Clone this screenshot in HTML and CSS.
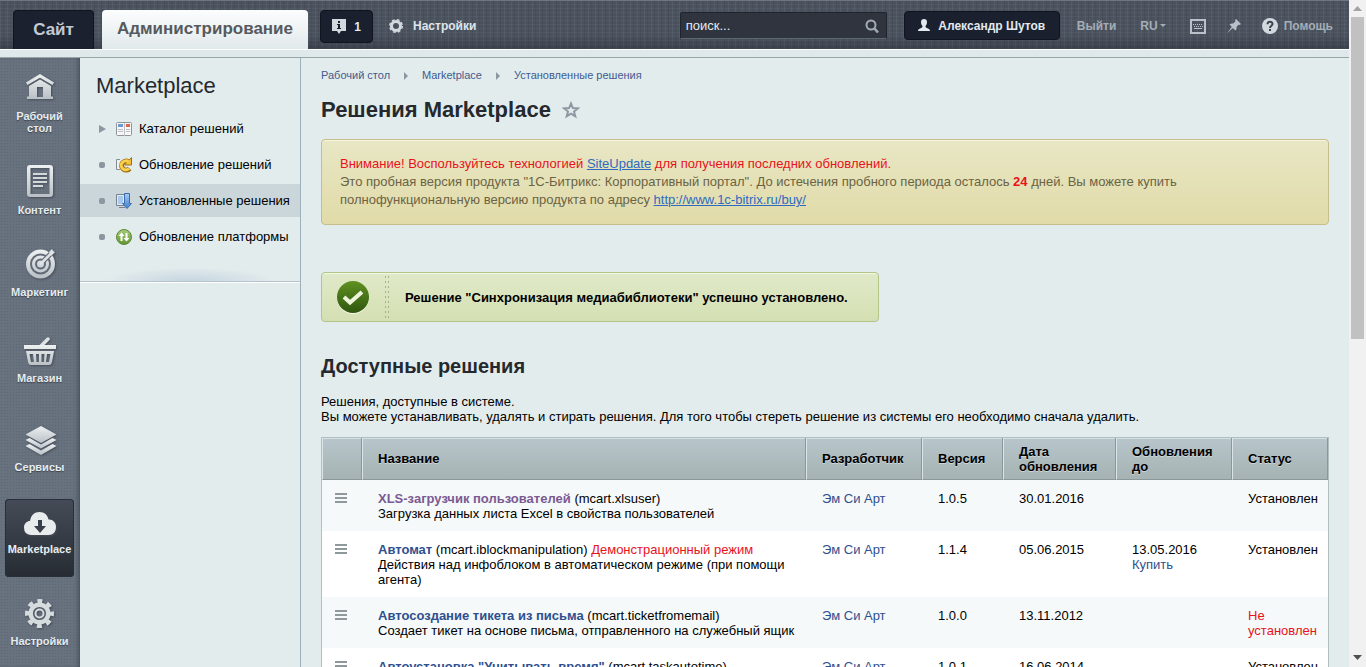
FILE: index.html
```
<!DOCTYPE html>
<html lang="ru">
<head>
    <meta charset="UTF-8">
    <meta name="viewport" content="width=device-width, initial-scale=1.0">
    <title>Решения Marketplace</title>
    <link rel="stylesheet" href="styles.css">
</head>
<body>
    <!-- Общие градиенты для иконок -->
    <svg class="defs" width="0" height="0" aria-hidden="true">
        <defs>
            <linearGradient id="silver" x1="0" y1="0" x2="0" y2="1">
                <stop offset="0" stop-color="#eef1f2"/>
                <stop offset="1" stop-color="#b9c0c5"/>
            </linearGradient>
            <linearGradient id="greenDark" x1="0" y1="0" x2="0" y2="1">
                <stop offset="0" stop-color="#5f9120"/>
                <stop offset="1" stop-color="#2f5610"/>
            </linearGradient>
            <linearGradient id="greenLight" x1="0" y1="0" x2="0" y2="1">
                <stop offset="0" stop-color="#a9cc7c"/>
                <stop offset="1" stop-color="#5f9431"/>
            </linearGradient>
            <linearGradient id="gold" x1="0" y1="0" x2="0" y2="1">
                <stop offset="0" stop-color="#ffe27a"/>
                <stop offset="1" stop-color="#e8a51b"/>
            </linearGradient>
            <linearGradient id="blue" x1="0" y1="0" x2="0" y2="1">
                <stop offset="0" stop-color="#a9cbf2"/>
                <stop offset="1" stop-color="#3f7fd0"/>
            </linearGradient>
        </defs>
    </svg>

    <div class="page">
        <!-- Верхняя панель -->
        <header class="header">
            <a href="#" class="tab tab-site">Сайт</a>
            <a href="#" class="tab tab-admin">Администрирование</a>
            <button type="button" class="notify">
                <svg width="14" height="15" viewBox="0 0 14 15"><path fill="#d3d9df" d="M0 0h14v12H9l-2 3-2-3H0z"/><path fill="#1b202e" d="M6 2h2v2H6zM5 5h3v4h1v1H5V9h1V6H5z"/></svg>
                <span>1</span>
            </button>
            <a href="#" class="settings">
                <svg width="14" height="14" viewBox="0 0 14 14"><circle cx="7" cy="7" r="4.500" fill="none" stroke="#d3d9df" stroke-width="3"/><circle cx="7" cy="7" r="6.300" fill="none" stroke="#d3d9df" stroke-width="1.400" stroke-dasharray="2.800 2.150"/></svg>
                <span>Настройки</span>
            </a>

            <form class="search">
                <input type="text" value="поиск..." aria-label="Поиск">
                <button type="button" aria-label="Найти">
                    <svg width="14" height="14" viewBox="0 0 14 14" fill="none" stroke="#a3abb4"><circle cx="6" cy="6" r="4.500" stroke-width="2"/><path stroke-width="2.500" d="M9 9l4 4.500"/></svg>
                </button>
            </form>
            <button type="button" class="user">
                <svg width="12" height="13" viewBox="0 0 12 13"><path fill="#e3e9ef" d="M6 0c2 0 3 1.200 3 3.200C9 5 8 6.500 7.500 7c0 1.500 1 2 2.500 2.500 1.300.5 2 1.300 2 2.500H0c0-1.200.7-2 2-2.500C3.500 9 4.500 8.500 4.500 7 4 6.500 3 5 3 3.200 3 1.200 4 0 6 0z"/></svg>
                <span>Александр Шутов</span>
            </button>
            <a href="#" class="link">Выйти</a>
            <a href="#" class="link lang">RU<svg width="6" height="4" viewBox="0 0 6 4"><path fill="#a5adb6" d="M0 0h6L3 3z"/></svg></a>
            <a href="#" class="tool" aria-label="Горячие клавиши">
                <svg width="16" height="15" viewBox="0 0 16 15"><rect x="1" y="1" width="14" height="13" fill="none" stroke="#bac1c9" stroke-width="2"/><path stroke="#bac1c9" stroke-dasharray="1 1" d="M3 5.500h10M4 7.500h9"/><path stroke="#bac1c9" d="M4 9.500h8"/></svg>
            </a>
            <a href="#" class="tool" aria-label="Закрепить">
                <svg width="14" height="15" viewBox="0 0 14 15"><path fill="#bac1c9" d="M9 0l5 5-1.500 1-1-.3L9.500 8c.3 1.500 0 2.500-1 3.500L5.700 8.900 0 14.500 4.800 7.800 2.500 5.500c1-1 2.500-1.300 3.700-1L8.500 2.300 8 1z"/></svg>
            </a>
            <a href="#" class="link help">
                <svg width="16" height="16" viewBox="0 0 16 16"><circle cx="8" cy="8" r="8" fill="#d3d9df"/><path fill="none" stroke="#3d434d" stroke-width="2" d="M5.500 6.200C5.500 3 10.500 3 10.500 6c0 1.800-2.500 1.800-2.500 4M8 11v2"/></svg>
                <span>Помощь</span>
            </a>
        </header>
        <div class="strip"></div>

        <div class="workarea">
            <!-- Основное меню -->
            <nav class="mainmenu">
                <a href="#">
                    <svg width="40" height="41" viewBox="0 0 40 41"><path fill="url(#silver)" fill-rule="evenodd" d="M20 5L34 13.500l-1.500 2.500L20 8.800 7.500 16 6 13.500zM20 10.500L31 17v10.500h2V30H7v-2.500h2V17zM17 18v10h6V18z"/></svg>
                    <span>Рабочий стол</span>
                </a>
                <a href="#">
                    <svg width="40" height="49" viewBox="0 0 40 49"><path fill="url(#silver)" fill-rule="evenodd" d="M10 10h20q3 0 3 3v26q0 3-3 3H10q-3 0-3-3V13q0-3 3-3zm.5 3v26h19V13z"/><path stroke="#d3d8db" stroke-width="2" d="M13 19h14M13 23h14M13 27h14M13 31h10"/></svg>
                    <span>Контент</span>
                </a>
                <a href="#">
                    <svg width="40" height="45" viewBox="0 0 40 45"><circle cx="20.500" cy="23" r="14.500" fill="url(#silver)"/><circle cx="20.500" cy="23" r="9.500" fill="none" stroke="#626b77" stroke-width="2"/><circle cx="20.500" cy="23" r="4.500" fill="none" stroke="#626b77" stroke-width="2"/><path stroke="#626b77" stroke-width="5" d="M23 20.500L33 10.500"/><path stroke="#dfe3e5" stroke-width="2.500" d="M20 23.500L31 12.500"/><path fill="#dfe3e5" d="M29 11l3-3 1 2 2 1-4 4z"/></svg>
                    <span>Маркетинг</span>
                </a>
                <a href="#">
                    <svg width="40" height="45" viewBox="0 0 40 45"><path stroke="#dfe3e5" stroke-width="3.500" stroke-linecap="round" d="M21 19l7-7"/><path fill="url(#silver)" fill-rule="evenodd" d="M4 18h32v4H4zM6 24h28l-2 11q-.5 3-3 3H11q-2.500 0-3-3zm3.500 3l1.500 8h3l-1-8zm6.500 0l.5 8h2.500v-8zm5.500 0v8H24l.5-8zm5.500 0l-1 8h3l1.500-8z"/></svg>
                    <span>Магазин</span>
                </a>
                <a href="#">
                    <svg width="40" height="48" viewBox="0 0 40 48" fill="url(#silver)"><path d="M21 13l15.500 8.500L21 30 5.500 21.500z"/><path d="M5.500 27l4-2L21 31.500 32.500 25l4 2L21 35.500z"/><path d="M5.500 33l4-2L21 37.500 32.500 31l4 2L21 42z"/></svg>
                    <span>Сервисы</span>
                </a>
                <a href="#" class="active">
                    <svg width="40" height="44" viewBox="0 0 40 44"><path fill="#e9eced" d="M11 36q-7-.5-7-7.500c0-4 3-6.500 6-6.500C11 16 14.500 13 19.500 13c5 0 8 3 9 7.500 4-.5 7.500 3 7.500 7.500 0 5-3 8-7.500 8z"/><path fill="#3a4049" d="M18 21h4v6h4l-6 7-6-7h4z"/></svg>
                    <span>Marketplace</span>
                </a>
                <a href="#">
                    <svg width="40" height="50" viewBox="0 0 40 50"><g fill="none" stroke="#d6dbde"><circle cx="19.500" cy="28.500" r="12.500" stroke-width="4" stroke-dasharray="5 4.817" stroke-dashoffset="2.500"/><circle cx="19.500" cy="28.500" r="8.800" stroke-width="4.500"/><circle cx="19.500" cy="28.500" r="4" stroke-width="2"/></g></svg>
                    <span>Настройки</span>
                </a>
            </nav>

            <!-- Подменю раздела -->
            <aside class="submenu">
                <div class="submenu-title">Marketplace</div>
                <ul>
                    <li>
                        <i class="arrow"></i>
                        <svg width="16" height="16" viewBox="0 0 16 16"><rect x=".5" y="1.500" width="15" height="13" rx="1" fill="#f6f6f6" stroke="#8f9498"/><path fill="#6c9ad0" d="M2 3h5v3H2z"/><path fill="#d96748" d="M10 3h4v3h-4z"/><path stroke="#b9bfc4" d="M2 8.500h5M2 10.500h5M10 8.500h4M10 10.500h4M8.500 2v13"/></svg>
                        <a href="#">Каталог решений</a>
                    </li>
                    <li>
                        <i class="dot"></i>
                        <svg width="16" height="16" viewBox="0 0 16 16"><path fill="#eef0f1" stroke="#858c92" d="M4 2.500H.5v10H4"/><path fill="none" stroke="#a06f14" stroke-width="5" d="M13.500 11.500A4.500 4.500 0 1 1 12 4.500"/><path fill="#f6c23c" stroke="#a06f14" d="M15.500.5v7.500h-7z"/><path fill="none" stroke="#fbd04d" stroke-width="3" d="M13 11.500A4.500 4.500 0 1 1 12.500 4.800"/></svg>
                        <a href="#">Обновление решений</a>
                    </li>
                    <li class="selected">
                        <i class="dot"></i>
                        <svg width="16" height="16" viewBox="0 0 16 16"><path fill="#dfeaf5" stroke="#77828c" d="M.5 1.500h11v11H.5zM3 14.500h6"/><path fill="#a8c9eb" d="M2 3h5v8H2z"/><path fill="url(#blue)" stroke="#3a6cab" d="M8.500.5h5v10h2l-4.500 5-4.500-5h2z"/></svg>
                        <a href="#">Установленные решения</a>
                    </li>
                    <li>
                        <i class="dot"></i>
                        <svg width="16" height="16" viewBox="0 0 16 16"><circle cx="8" cy="8" r="7.500" fill="url(#greenLight)" stroke="#5c8a35"/><path fill="#fff" d="M5.500 3.500l3 3.500h-2v5h-2V7h-2zM10.500 12.500l-3-3.500h2V4h2v5h2z"/></svg>
                        <a href="#">Обновление платформы</a>
                    </li>
                </ul>
            </aside>

            <main class="content">
                <nav class="breadcrumbs">
                    <a href="#">Рабочий стол</a><i></i>
                    <a href="#">Marketplace</a><i></i>
                    <a href="#">Установленные решения</a>
                </nav>

                <h1>Решения Marketplace
                    <svg width="18" height="18" viewBox="0 0 18 18"><path fill="none" stroke="#8f98a3" stroke-width="2" d="M9 2.500l1.900 4.600 4.900.3-3.800 3.100 1.300 4.900L9 12.700l-4.300 2.700L6 10.500 2.200 7.400l4.900-.3z"/></svg>
                </h1>

                <div class="warning">
                    <span class="red">Внимание! Воспользуйтесь технологией <a href="#">SiteUpdate</a> для получения последних обновлений.</span><br>
                    Это пробная версия продукта "1С-Битрикс: Корпоративный портал". До истечения пробного периода осталось <b class="red">24</b> дней. Вы можете купить<br>
                    полнофункциональную версию продукта по адресу <a href="#">http://www.1c-bitrix.ru/buy/</a>
                </div>

                <div class="success">
                    <svg width="34" height="34" viewBox="0 0 34 34"><circle cx="17" cy="18" r="16" fill="#f4f9e8"/><circle cx="17" cy="17" r="16" fill="url(#greenDark)"/><path fill="none" stroke="#eef4dc" stroke-width="4" d="M8 17l6 5.500L26 12"/></svg>
                    <div class="divider"></div>
                    <div>Решение "Синхронизация медиабиблиотеки" успешно установлено.</div>
                </div>

                <h2>Доступные решения</h2>
                <p>Решения, доступные в системе.<br>Вы можете устанавливать, удалять и стирать решения. Для того чтобы стереть решение из системы его необходимо сначала удалить.</p>

                <!-- Список решений -->
                <table>
                    <colgroup>
                        <col class="col-menu"><col><col class="col-vendor"><col class="col-version"><col class="col-date"><col class="col-until"><col class="col-status">
                    </colgroup>
                    <thead>
                        <tr>
                            <th></th>
                            <th>Название</th>
                            <th>Разработчик</th>
                            <th>Версия</th>
                            <th>Дата обновления</th>
                            <th>Обновления до</th>
                            <th>Статус</th>
                        </tr>
                    </thead>
                    <tbody>
                        <tr>
                            <td><button type="button" class="burger" aria-label="Действия"></button></td>
                            <td><a href="#" class="visited">XLS-загрузчик пользователей</a> (mcart.xlsuser)<br>Загрузка данных листа Excel в свойства пользователей</td>
                            <td><a href="#">Эм Си Арт</a></td>
                            <td>1.0.5</td>
                            <td>30.01.2016</td>
                            <td></td>
                            <td>Установлен</td>
                        </tr>
                        <tr>
                            <td><button type="button" class="burger" aria-label="Действия"></button></td>
                            <td><a href="#">Автомат</a> (mcart.iblockmanipulation) <span class="red">Демонстрационный режим</span><br>Действия над инфоблоком в автоматическом режиме (при помощи агента)</td>
                            <td><a href="#">Эм Си Арт</a></td>
                            <td>1.1.4</td>
                            <td>05.06.2015</td>
                            <td>13.05.2016<br><a href="#">Купить</a></td>
                            <td>Установлен</td>
                        </tr>
                        <tr>
                            <td><button type="button" class="burger" aria-label="Действия"></button></td>
                            <td><a href="#">Автосоздание тикета из письма</a> (mcart.ticketfromemail)<br>Создает тикет на основе письма, отправленного на служебный ящик</td>
                            <td><a href="#">Эм Си Арт</a></td>
                            <td>1.0.0</td>
                            <td>13.11.2012</td>
                            <td></td>
                            <td><span class="red">Не установлен</span></td>
                        </tr>
                        <tr>
                            <td><button type="button" class="burger" aria-label="Действия"></button></td>
                            <td><a href="#">Автоустановка "Учитывать время"</a> (mcart.taskautotime)</td>
                            <td><a href="#">Эм Си Арт</a></td>
                            <td>1.0.1</td>
                            <td>16.06.2014</td>
                            <td></td>
                            <td>Установлен</td>
                        </tr>
                    </tbody>
                </table>
            </main>
        </div>
    </div>

    <!-- Полоса прокрутки -->
    <div class="scrollbar">
        <svg width="9" height="5" viewBox="0 0 9 5"><path fill="#a3a3a3" d="M4.500 0L9 5H0z"/></svg>
        <div class="thumb"></div>
        <svg width="9" height="5" viewBox="0 0 9 5"><path fill="#505050" d="M4.500 5L9 0H0z"/></svg>
    </div>
</body>
</html>
```
FILE: styles.css
```
* {
    box-sizing: border-box;
}

body {
    display: flex;
    height: 100vh;
    margin: 0;
    overflow: hidden;
    font-family: "Liberation Sans", Arial, sans-serif;
    font-size: 13px;
    line-height: 15px;
    color: #000;
    background-color: #e3eced;
}

a {
    color: #2f4f8f;
    text-decoration: none;
}

button {
    font-family: inherit;
    cursor: pointer;
}

svg {
    flex-shrink: 0;
}

.defs {
    position: absolute;
}

.red {
    color: #e8121b;
}

.page {
    flex: 1;
    min-width: 0;
    display: flex;
    flex-direction: column;
}

/* Верхняя панель */
.header {
    display: flex;
    align-items: flex-start;
    height: 49px;
    flex-shrink: 0;
    padding: 9px 16px 0 13px;
    border-top: 1px solid #6d7681;
    background-color: #4a525e;
    background-image:
        linear-gradient(to bottom, transparent 70%, rgba(30, 35, 45, 0.35)),
        repeating-linear-gradient(90deg, rgba(255, 255, 255, 0.05) 0 1px, transparent 1px 3px, rgba(0, 0, 0, 0.06) 3px 4px, transparent 4px 7px),
        repeating-linear-gradient(0deg, rgba(255, 255, 255, 0.04) 0 1px, transparent 1px 4px);
    font-size: 12px;
    font-weight: bold;
}

.header > * {
    flex-shrink: 0;
}

.tab {
    height: 39px;
    border-radius: 4px 4px 0 0;
    font-size: 17px;
    line-height: 38px;
    text-align: center;
}

.tab-site {
    width: 81px;
    margin-right: 8px;
    border: 1px solid #12151f;
    border-bottom: none;
    background-color: #1c2130;
    color: #c3cad3;
}

.tab-admin {
    width: 206px;
    margin-right: 12px;
    background: linear-gradient(#fcfdfd, #e1e9eb);
    color: #555a5e;
}

.notify,
.user {
    display: flex;
    align-items: center;
    justify-content: center;
    gap: 8px;
    padding: 0;
    border: 1px solid #11141e;
    border-radius: 4px;
    background-color: #1b202e;
    color: #e3e9ef;
    font-size: 12px;
    font-weight: bold;
}

.notify {
    width: 53px;
    height: 33px;
    margin-right: 16px;
}

.settings {
    display: flex;
    align-items: center;
    gap: 10px;
    height: 32px;
    color: #dfe5ea;
}

.search {
    display: flex;
    align-items: center;
    width: 207px;
    height: 27px;
    margin: 2px 17px 0 auto;
    border: 1px solid #20242d;
    border-bottom-color: #5e6671;
    border-radius: 2px;
    background-color: #30343f;
}

.search input {
    flex: 1;
    min-width: 0;
    padding: 0 5px;
    border: none;
    background: none;
    color: #e6ebef;
    font-family: inherit;
    font-size: 13px;
}

.search button {
    display: flex;
    padding: 0 7px 0 0;
    border: none;
    background: none;
}

.user {
    width: 156px;
    height: 29px;
    margin: 1px 17px 0 0;
}

.link {
    display: flex;
    align-items: center;
    height: 32px;
    margin-right: 24px;
    color: #a5adb6;
}

.lang {
    gap: 2px;
}

.tool {
    display: flex;
    align-items: center;
    height: 32px;
    margin-right: 21px;
}

.help {
    gap: 6px;
    margin-right: 0;
}

.strip {
    flex-shrink: 0;
    height: 9px;
    border-top: 1px solid #fff;
    border-bottom: 1px solid #96a5a6;
    background-color: #dfe8eb;
}

/* Вкладка заходит на светлую полосу */
.tab-admin {
    height: 40px;
    margin-bottom: -1px;
}

.workarea {
    flex: 1;
    min-height: 0;
    display: flex;
}

/* Основное меню слева */
.mainmenu {
    display: flex;
    flex-direction: column;
    align-items: center;
    gap: 8px;
    width: 80px;
    flex-shrink: 0;
    padding: 11px 6px 0 5px;
    background-color: #68727f;
    background-image: radial-gradient(#5d6673 1px, transparent 1px);
    background-size: 3px 3px;
    box-shadow: inset -4px 0 4px -2px #49515d;
}

.mainmenu a {
    display: flex;
    flex-direction: column;
    align-items: center;
    width: 100%;
    height: 78px;
    flex-shrink: 0;
    border-radius: 4px;
    color: #e6ecef;
    font-size: 11px;
    font-weight: bold;
    line-height: 12px;
    text-align: center;
    text-shadow: 0 1px 1px #3c434d;
}

.mainmenu svg {
    filter: drop-shadow(1px 1px 1px #454c57);
}

.mainmenu a.active {
    background: linear-gradient(#454c57, #272c33);
    box-shadow: inset 0 0 0 1px #2a2f37;
}

/* Подменю */
.submenu {
    width: 221px;
    flex-shrink: 0;
    border-right: 1px solid #9fb0be;
}

.submenu-title {
    padding: 14px 16px 0;
    font-size: 22px;
    line-height: 28px;
    color: #25292d;
}

.submenu ul {
    display: flex;
    flex-direction: column;
    gap: 3px;
    height: 182px;
    margin: 0;
    padding: 12px 0 0;
    list-style: none;
    border-bottom: 1px solid #b3c2cb;
    box-shadow: 0 1px #fff;
    background: radial-gradient(ellipse at bottom, #c6d5e0, transparent 70%) bottom / 80% 14px no-repeat;
}

.submenu li {
    display: flex;
    align-items: center;
    height: 33px;
    padding-left: 19px;
    white-space: nowrap;
}

.submenu li a {
    color: #000;
}

.submenu li svg {
    margin: 0 7px 0 9px;
}

.submenu .selected {
    background-color: #cbd6db;
}

.arrow {
    width: 8px;
    border: 4px solid transparent;
    border-left: 7px solid #8b97a1;
    border-right: 0;
}

.dot {
    width: 6px;
    height: 6px;
    margin-right: 2px;
    border-radius: 2px;
    background-color: #8b97a1;
}

/* Рабочая область */
.content {
    flex: 1;
    min-width: 0;
    padding: 10px 20px 0;
}

.breadcrumbs {
    display: flex;
    align-items: center;
    font-size: 11px;
}

.breadcrumbs a {
    color: #3f5b8f;
}

.breadcrumbs i {
    margin: 0 14px;
    border: 4px solid transparent;
    border-left: 4px solid #8b97a1;
    border-right: 0;
}

h1 {
    display: flex;
    align-items: center;
    gap: 11px;
    margin: 13px 0 15px;
    font-size: 22px;
    line-height: 28px;
    color: #25292d;
}

.warning {
    min-height: 86px;
    padding: 15px 18px;
    border: 1px solid #c5bd8a;
    border-radius: 4px;
    background: linear-gradient(#e8e7c5, #e1dba8);
    box-shadow: inset 0 1px #f6f5e0;
    line-height: 18px;
    color: #6b6344;
}

.warning a {
    color: #2e6bc0;
    text-decoration: underline;
}

.success {
    display: flex;
    align-items: center;
    width: 558px;
    height: 50px;
    margin-top: 47px;
    padding: 0 14px;
    border: 1px solid #b0c586;
    border-radius: 4px;
    background: linear-gradient(#e0e9c8, #d4e0b3);
    box-shadow: inset 0 1px #f3f8e4;
    font-weight: bold;
}

/* Двойная пунктирная линия */
.divider {
    width: 4px;
    height: 42px;
    margin: 0 16px 0 15px;
    background:
        repeating-linear-gradient(#a3b383 0 2px, transparent 2px 5px) left / 1px 100% no-repeat,
        repeating-linear-gradient(#a3b383 0 2px, transparent 2px 5px) right / 1px 100% no-repeat;
}

h2 {
    margin: 32px 0 16px;
    font-size: 20px;
    line-height: 24px;
    color: #25292d;
}

p {
    margin: 0 0 13px;
}

/* Таблица */
table {
    width: 100%;
    table-layout: fixed;
    border: 1px solid #b0bfc2;
    border-collapse: separate;
    border-spacing: 0;
    background-color: #fff;
}

.col-menu {
    width: 40px;
}

.col-vendor,
.col-until {
    width: 116px;
}

.col-version {
    width: 81px;
}

.col-date {
    width: 113px;
}

.col-status {
    width: 96px;
}

th {
    height: 42px;
    padding: 5px 15px;
    border-left: 1px solid #dbe4e6;
    border-right: 1px solid #8a989b;
    border-bottom: 1px solid #8a989b;
    background: linear-gradient(#b7c6cb, #a6b2b3);
    box-shadow: inset 0 1px #d5dfe2;
    text-align: left;
    text-shadow: 0 1px #ced8da;
}

td {
    padding: 11px 10px 10px 16px;
    vertical-align: top;
}

td:last-child {
    padding-right: 4px;
}

td:first-child {
    padding: 11px 0 0 13px;
}

tbody tr:nth-child(odd) {
    background-color: #f5f9f9;
}

td:nth-child(2) a {
    font-weight: bold;
}

td a.visited {
    color: #7b5a93;
}

.burger {
    display: block;
    width: 12px;
    height: 12px;
    padding: 0;
    border: none;
    background: repeating-linear-gradient(transparent 0 2px, #8f989b 2px 4px);
}

/* Полоса прокрутки */
.scrollbar {
    display: flex;
    flex-direction: column;
    align-items: center;
    width: 17px;
    flex-shrink: 0;
    padding: 6px 0 7px;
    background-color: #f1f1f1;
}

.thumb {
    width: 13px;
    height: 322px;
    margin: 6px 0 auto;
    background-color: #c1c1c1;
}
```
